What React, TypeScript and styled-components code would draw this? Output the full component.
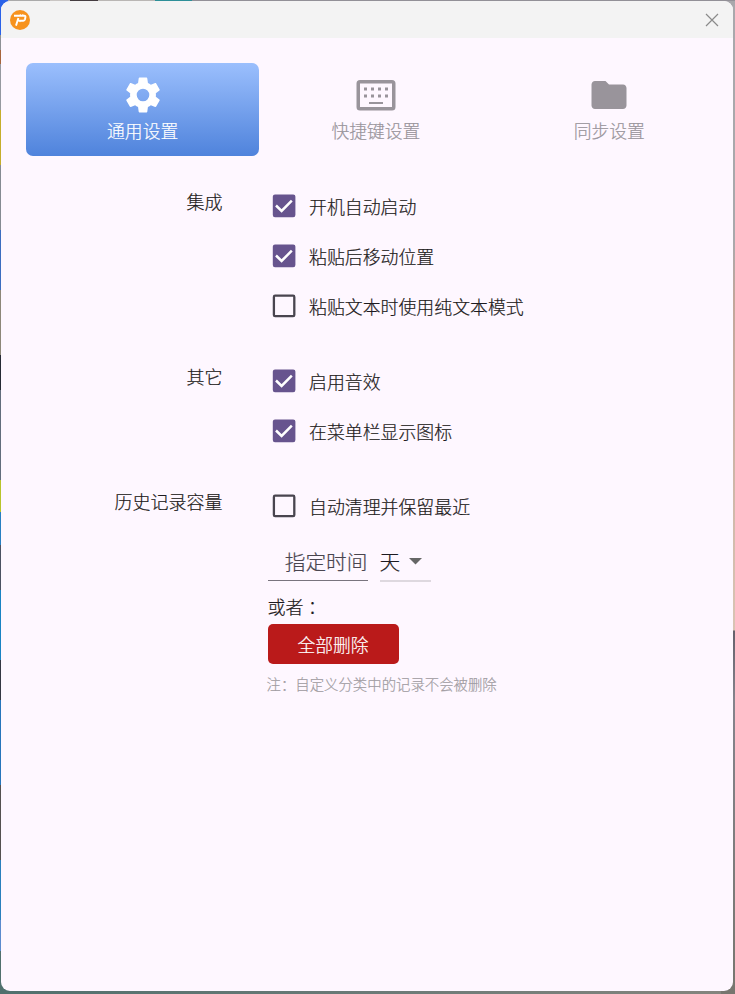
import React from "react";
import styled, { createGlobalStyle, css } from "styled-components";

const GlobalStyle = createGlobalStyle`
  * { box-sizing: border-box; }
  body {
    margin: 0;
    font-family: "Noto Sans CJK SC", "Noto Sans", sans-serif;
    font-weight: 300;
    color: #1d1a20;
    -webkit-text-stroke: 0.2px currentColor;
  }
`;

const Desktop = styled.div`
  height: 994px;
  padding: 1px 2px 3px 1px;
  overflow: hidden;
  background:
    linear-gradient(90deg, #2a62e8 0 8px, #aaa 8px 50px, #c9c5c3 50px 70px, #443c40 70px 98px, #b9b6b4 98px 155px, #2d8f98 155px 192px, #929097 192px) 0 0 / 100% 1px no-repeat,
    linear-gradient(#a9a8ac 0 240px, #c3a69b 300px, #d9c4b4 630px, #65616c 631px, #85838c 700px, #77766f 994px) 100% 0 / 14px 100% no-repeat,
    linear-gradient(90deg, #50706d, #6b7a77 50%, #85857e) 0 100% / 100% 14px no-repeat,
    linear-gradient(#2a62e8 0 35px, #8e9196 35px 50px, #a7653d 50px 64px, #9699a0 64px 110px, #c5ae2c 110px 165px, #858b92 165px 230px, #3c6dc0 230px 290px, #8d8779 290px 355px, #262a35 355px 390px, #626d7c 390px 480px, #b8c42c 480px 512px, #287fc2 512px 545px, #4b5262 545px 590px, #1a83c3 590px 660px, #343743 660px 700px, #2775bb 700px 785px, #545150 785px 860px, #2a80bd 860px 920px, #5b8bce 920px 951px, #50706d 951px) 0 0 / 14px 100% no-repeat;
`;

const Window = styled.main`
  height: 990px;
  overflow: hidden;
  border-radius: 9px;
  background: #fef7ff;
`;

const TitleBar = styled.header`
  height: 37px;
  padding: 0 14px 0 9px;
  display: flex;
  align-items: center;
  justify-content: space-between;
  background: #f3f3f3;
  svg { display: block; }
`;

const Tabs = styled.nav`
  display: grid;
  grid-template-columns: repeat(3, 233.3px);
  padding: 25px 0 0 25px;
`;

const Tab = styled.button<{ $active?: boolean }>`
  height: 92.5px;
  padding: 11px 0 0;
  border: 0;
  border-radius: 7px;
  background: none;
  display: flex;
  flex-direction: column;
  align-items: center;
  font: inherit;
  font-size: 17.8px;
  line-height: 26px;
  color: #99949b;
  ${(p) =>
    p.$active &&
    css`
      color: #fff;
      background: linear-gradient(#9bbffd, #4f83dc);
    `}
  svg { display: block; fill: currentColor; margin-bottom: 1px; }
`;

const Section = styled.section`
  display: grid;
  grid-template-columns: 221.5px 1fr;
  column-gap: 45px;
  margin-top: 25px;
  &:first-of-type { margin-top: 25.5px; }
`;

const SectionTitle = styled.h2`
  margin: 7px 0 0;
  font-size: 18px;
  font-weight: 300;
  line-height: 26px;
  text-align: right;
`;

const Options = styled.div`
  display: flex;
  flex-direction: column;
`;

const Option = styled.label`
  height: 50px;
  display: flex;
  align-items: center;
  gap: 13px;
  padding-left: 4.5px;
  font-size: 17.9px;
  line-height: 26px;
  svg { display: block; flex: none; }
  span { padding-bottom: 0; }
`;

const Fields = styled.div`
  display: flex;
  gap: 12px;
  align-items: flex-start;
  padding-top: 12px;
`;

const DaysField = styled.div`
  width: 100px;
  height: 37.5px;
  border-bottom: 1px solid #79747e;
  color: #49454f;
  font-size: 20.7px;
  line-height: 37px;
  text-align: right;
  white-space: nowrap;
`;

const UnitSelect = styled.div`
  width: 51px;
  height: 38.5px;
  display: flex;
  align-items: center;
  gap: 9px;
  border-bottom: 2px solid #ded8df;
  font-size: 20.7px;
  line-height: 37px;
`;

const Either = styled.div`
  height: 26px;
  margin-top: 11px;
  font-family: "Noto Sans CJK TC", sans-serif;
  font-size: 18px;
  line-height: 26px;
  span { vertical-align: -1px; line-height: 1; }
`;

const DeleteButton = styled.button`
  width: 131px;
  height: 40px;
  margin-top: 5px;
  padding: 0;
  border: 0;
  border-radius: 5px;
  background: #ba1a1a;
  color: #fff;
  font: inherit;
  font-size: 17.8px;
  line-height: 26px;
`;

const Note = styled.p`
  margin: 9.5px 0 0 -1px;
  font-size: 14.4px;
  line-height: 21px;
  color: #a19ca2;
`;

const Logo = () => (
  <svg width="20" height="20" viewBox="0 0 20 20">
    <circle cx="10" cy="10" r="10" fill="#f7931e" />
    <path d="M4 5.800H14.300Q15.700 5.800 15.400 7.200L15 9.300Q14.700 10.700 13.300 10.700H8.500M8.400 8L6 15.600" fill="none" stroke="#fff" strokeWidth="1.900" strokeLinejoin="round" />
    <path d="M10.300 4v2M12.800 4v2M10 10.800v1.400" stroke="#fff" strokeWidth="0.800" />
  </svg>
);

const CloseIcon = () => (
  <svg width="14" height="14" viewBox="0 0 14 14">
    <path d="M1 1L13 13M13 1L1 13" stroke="#8a8a8a" strokeWidth="1.200" />
  </svg>
);

const GearIcon = () => (
  <svg width="42" height="42" viewBox="0.300 0.300 23.400 23.400">
    <path d="M19.140 12.940c.04-.3.06-.61.06-.94s-.02-.64-.07-.94l2.030-1.580c.18-.14.23-.41.12-.61l-1.920-3.320c-.12-.22-.37-.29-.59-.22l-2.390.96c-.5-.38-1.030-.7-1.620-.94l-.36-2.540C14.360 2.570 14.160 2.200 13.920 2.200h-3.840c-.24 0-.43.17-.47.41l-.36 2.740c-.59.24-1.130.57-1.620.94l-2.390-.96c-.22-.08-.47 0-.59.22L2.740 8.870c-.12.21-.08.47.12.61l2.030 1.580c-.05.3-.09.63-.09.94s.02.64.07.94l-2.030 1.580c-.18.14-.23.41-.12.61l1.920 3.320c.12.22.37.29.59.22l2.390-.96c.5.38 1.030.7 1.620.94l.36 2.740c.05.24.24.41.48.41h3.840c.24 0 .44-.17.47-.41l.36-2.740c.59-.24 1.130-.56 1.620-.94l2.390.96c.22.08.47 0 .59-.22l1.920-3.320c.12-.22.07-.47-.12-.61l-2.010-1.580zM12 15.500a3.500 3.500 0 1 1 0-7 3.500 3.500 0 0 1 0 7z" />
  </svg>
);

const KeyboardIcon = () => (
  <svg width="42" height="42" viewBox="0 0 42 42">
    <path fillRule="evenodd" d="M5 6H37Q40.500 6 40.500 9.500V33Q40.500 36.500 37 36.500H5Q1.500 36.500 1.500 33V9.500Q1.500 6 5 6ZM5 9.500V33H37V9.500Z" />
    {[14, 21].map((y) =>
      [9, 16, 23, 30].map((x) => <rect key={`${x}-${y}`} x={x} y={y - 0.5} width="3" height="3" />)
    )}
    <rect x="14" y="28" width="14" height="2" />
  </svg>
);

const FolderIcon = () => (
  <svg width="42" height="42" viewBox="0 0 24 24">
    <path d="M10 4H4c-1.100 0-1.990.9-1.990 2L2 18c0 1.100.9 2 2 2h16c1.100 0 2-.9 2-2V8c0-1.100-.9-2-2-2h-8l-2-2z" />
  </svg>
);

const CheckBox = ({ checked }: { checked?: boolean }) => (
  <svg width="24" height="24" viewBox="0 0 24 24">
    {checked ? (
      <>
        <rect x="0.800" y="0.600" width="22.600" height="22.600" rx="2.200" fill="#67548e" />
        <path d="M4 11.500L9.600 17L19.800 6.600" fill="none" stroke="#fff" strokeWidth="2.500" />
      </>
    ) : (
      <rect x="1.900" y="1.700" width="20.400" height="20.400" rx="1.200" fill="none" stroke="#49454f" strokeWidth="2.300" />
    )}
  </svg>
);

const CheckOption = ({ label, checked }: { label: string; checked?: boolean }) => (
  <Option>
    <CheckBox checked={checked} />
    <span>{label}</span>
  </Option>
);

export default function App() {
  return (
    <>
      <GlobalStyle />
      <Desktop lang="zh-CN">
        <Window>
          <TitleBar>
            <Logo />
            <CloseIcon />
          </TitleBar>
          <Tabs>
            <Tab $active><GearIcon />通用设置</Tab>
            <Tab><KeyboardIcon />快捷键设置</Tab>
            <Tab><FolderIcon />同步设置</Tab>
          </Tabs>
          <Section>
            <SectionTitle>集成</SectionTitle>
            <Options>
              <CheckOption checked label="开机自动启动" />
              <CheckOption checked label="粘贴后移动位置" />
              <CheckOption label="粘贴文本时使用纯文本模式" />
            </Options>
          </Section>
          <Section>
            <SectionTitle>其它</SectionTitle>
            <Options>
              <CheckOption checked label="启用音效" />
              <CheckOption checked label="在菜单栏显示图标" />
            </Options>
          </Section>
          <Section>
            <SectionTitle>历史记录容量</SectionTitle>
            <Options>
              <CheckOption label="自动清理并保留最近" />
              <Fields>
                <DaysField>指定时间</DaysField>
                <UnitSelect>
                  天
                  <svg width="13" height="7" viewBox="0 0 13 7"><path d="M0 0H13L6.500 6.500Z" fill="#666" /></svg>
                </UnitSelect>
              </Fields>
              <Either lang="zh-TW">或者<span>：</span></Either>
              <DeleteButton>全部删除</DeleteButton>
              <Note>注：自定义分类中的记录不会被删除</Note>
            </Options>
          </Section>
        </Window>
      </Desktop>
    </>
  );
}
